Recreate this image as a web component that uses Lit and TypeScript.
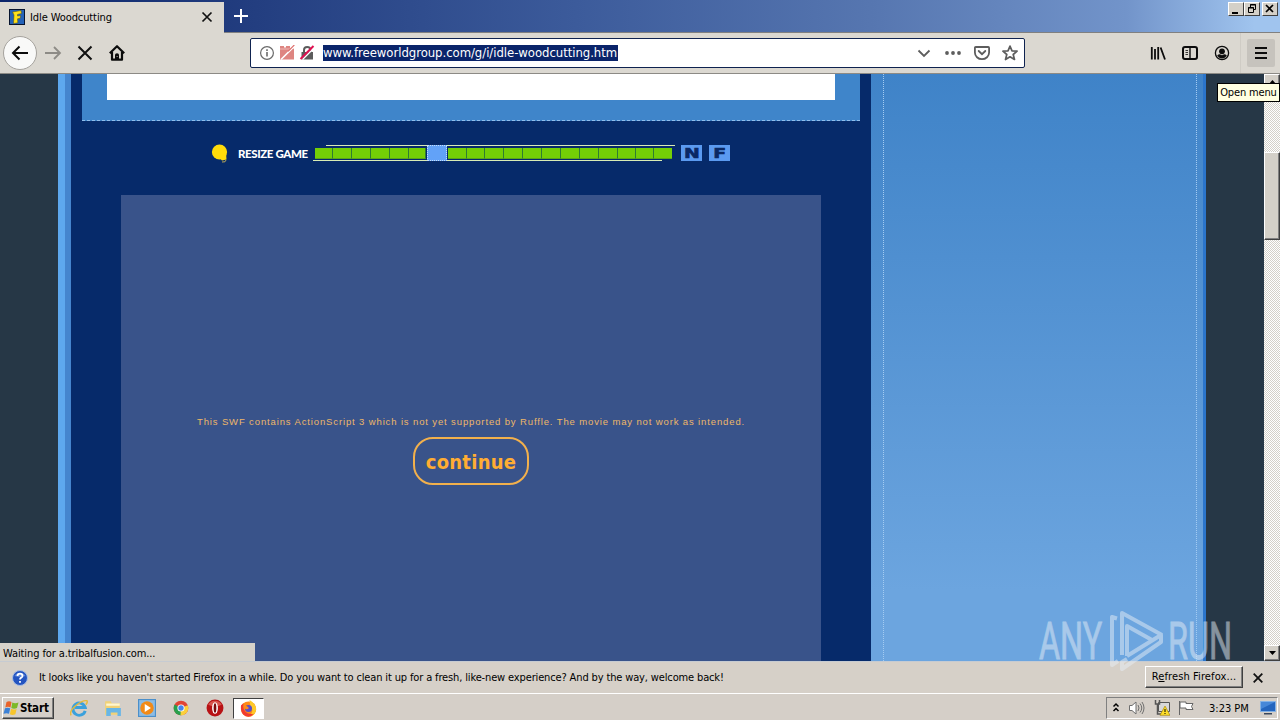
import { LitElement, html, css, svg } from "lit";
import { customElement } from "lit/decorators.js";

// widths of the blocks on the resize bar, -1 marks the handle
const BLOCKS = [18, 19, 19, 19, 19, 17, -1, 19, 18, 19, 19, 19, 19, 19, 19, 19, 18, 18, 18];

@customElement("browser-tabs")
class BrowserTabs extends LitElement {
  static get styles() {
    return css`
      :host {
        display: flex;
        height: 33px;
        box-sizing: border-box;
        background: linear-gradient(90deg, #0a246a 0, #233e80 20%, #3c5b9b 45%, #5676b0 68%, #7294ca 88%, #a0c4ee 98%);
        border-bottom: 1px solid #808080;
        position: relative;
      }
      .tab {
        display: flex;
        align-items: center;
        width: 224px;
        height: 31px;
        margin-top: 2px;
        background: #dbd8d1;
        box-sizing: border-box;
        padding: 0 11px 1px 9px;
      }
      .title {
        flex: 1;
        margin-left: 5px;
        letter-spacing: -0.1px;
      }
      .plus {
        margin: 9px 0 0 10px;
      }
      .buttons {
        display: flex;
        margin: 2px 2px 0 auto;
        height: 14px;
      }
      .btn {
        width: 16px;
        height: 14px;
        box-sizing: border-box;
        background: #d4d0c8;
        border: 1px solid;
        border-color: #fff #404040 #404040 #fff;
      }
      .btn:last-child {
        margin-left: 2px;
      }
      svg {
        display: block;
      }
    `;
  }

  render() {
    return html`
      <div class="tab">
        <svg width="16" height="16" viewBox="0 0 16 16">
          <rect x=".5" y=".5" width="15" height="15" fill="#2462b8" stroke="#07142f" />
          <path d="M3.500 3 12 1.500 12.500 4.500 8.500 5.400 8.500 7 11.500 6.500 11.300 9.200 8.500 9.800 8.800 13.800 4.500 14.500 5 6z" fill="#ffe11b" stroke="#594f08" stroke-width=".5" />
        </svg>
        <span class="title">Idle Woodcutting</span>
        <svg width="12" height="12" viewBox="0 0 12 12">
          <path d="M1.500 1.500 10.500 10.500M10.500 1.500 1.500 10.500" stroke="#111" stroke-width="1.700" />
        </svg>
      </div>
      <svg class="plus" width="14" height="14" viewBox="0 0 14 14">
        <path d="M7 0V14M0 7H14" stroke="#fff" stroke-width="2" />
      </svg>
      <div class="buttons">
        <div class="btn"><svg width="14" height="12"><path d="M3 9h6v2H3z" /></svg></div>
        <div class="btn">
          <svg width="14" height="12" fill="none" stroke="#000">
            <path d="M5.500 4V1.500h5v5H9M5 2h6M3.500 4.500h5v5h-5zM3 5h6" />
          </svg>
        </div>
        <div class="btn">
          <svg width="14" height="12"><path d="M3 2 10 9M10 2 3 9" stroke="#000" stroke-width="1.700" /></svg>
        </div>
      </div>
    `;
  }
}

@customElement("nav-bar")
class NavBar extends LitElement {
  static get styles() {
    return css`
      :host {
        display: flex;
        align-items: center;
        height: 41px;
        box-sizing: border-box;
        background: #dbd8d1;
        border-bottom: 1px solid #8c8a85;
        position: relative;
      }
      svg {
        display: block;
        flex: none;
      }
      .left {
        display: flex;
        align-items: center;
        width: 250px;
        box-sizing: border-box;
        padding-left: 3px;
      }
      .back {
        width: 34px;
        height: 34px;
        box-sizing: border-box;
        border: 1px solid #a5a29d;
        border-radius: 50%;
        background: #f9f9f8;
        display: grid;
        place-items: center;
        margin-right: 8px;
      }
      .left > svg {
        margin-right: 15px;
      }
      .left > .home {
        margin-right: 0;
      }
      .url {
        display: flex;
        align-items: center;
        width: 775px;
        height: 30px;
        margin-top: -1px;
        box-sizing: border-box;
        border: 1px solid #0f2350;
        border-radius: 2px;
        background: #fff;
        padding: 0 6px 0 8px;
      }
      .url > svg {
        margin-right: 4px;
      }
      .address {
        background: #0a246a;
        color: #fff;
        font-size: 13px;
        line-height: 16px;
        height: 16px;
        width: 295px;
        margin-left: 4px;
        white-space: nowrap;
        letter-spacing: -0.05px;
      }
      .actions {
        display: flex;
        gap: 12px;
        margin-left: auto;
      }
      .tools {
        display: flex;
        align-items: center;
        margin-left: auto;
        gap: 16px;
        height: 40px;
      }
      .menu {
        height: 40px;
        border-left: 1px solid #cfccc5;
        display: flex;
        align-items: center;
        padding: 0 5px 0 6px;
        margin-left: -6px;
      }
      .menu div {
        width: 28px;
        height: 28px;
        background: #c6c3bd;
        border-radius: 2px;
        display: grid;
        place-items: center;
      }
    `;
  }

  render() {
    return html`
      <div class="left">
        <div class="back">
          <svg width="18" height="16" viewBox="0 0 18 16" fill="none" stroke="#0c0c0c" stroke-width="2">
            <path d="M17 8H2M8.500 1.500 2 8l6.500 6.500" />
          </svg>
        </div>
        <svg width="17" height="16" viewBox="0 0 17 16" fill="none" stroke="#8d8b86" stroke-width="1.800">
          <path d="M0 8h15M9 2l6 6-6 6" />
        </svg>
        <svg width="16" height="16" viewBox="0 0 16 16" stroke="#111" stroke-width="2">
          <path d="M1.500 1.500 14.500 14.500M14.500 1.500 1.500 14.500" />
        </svg>
        <svg class="home" width="18" height="16" viewBox="-1 0 18 16">
          <path d="M.8 8.300 8 1.200 15.200 8.300M3 7v7.700h10V7" fill="none" stroke="#0c0c0c" stroke-width="2.200" stroke-linejoin="round" />
          <path d="M6 14.500V9.800q0-1.600 2-1.600t2 1.600v4.700z" fill="#0c0c0c" />
          <path d="M7.700 11h.8v1h-.8z" fill="#dbd8d1" />
        </svg>
      </div>
      <div class="url">
        <svg width="16" height="16" viewBox="0 0 16 16">
          <circle cx="8" cy="8" r="6.400" fill="none" stroke="#6b6b6b" stroke-width="1.200" />
          <path d="M7.200 7h1.600v4.500H7.200zM7.200 4.300h1.600v1.600H7.200z" fill="#6b6b6b" />
        </svg>
        <svg width="16" height="16" viewBox="0 0 16 16">
          <path d="M1 1h4v1.500h2V1h4v2.500h4V14.500H1z" fill="#de8581" />
          <path d="M1 4h10" stroke="#f3c8c6" stroke-width=".8" />
          <path d="M15.500 1 2 14.500" stroke="#fff" stroke-width="1.600" />
          <path d="M15.300 0 9 6.300" stroke="#de6f6c" stroke-width="1.200" />
        </svg>
        <svg width="16" height="16" viewBox="0 0 16 16">
          <path d="M5 7.500V5q0-3 3.200-3t3.200 3v2.500" fill="none" stroke="#5c5c5c" stroke-width="2" />
          <path d="M2.500 7h11.500V14.500H2.500z" fill="#5c5c5c" />
          <path d="M15.500 2.500 3.500 14.500" stroke="#fff" stroke-width="1.500" />
          <path d="M14.500 1 1.500 14" stroke="#e01050" stroke-width="2" />
        </svg>
        <div class="address">www.freeworldgroup.com/g/i/idle-woodcutting.htm</div>
        <div class="actions">
          <svg width="16" height="16" viewBox="0 0 16 16" fill="none" stroke="#5d5d5d" stroke-width="1.800">
            <path d="M2.500 5.500 8 11l5.500-5.500" />
          </svg>
          <svg width="18" height="16" viewBox="0 0 18 16" fill="#5d5d5d">
            <circle cx="3" cy="8" r="1.900" /><circle cx="9" cy="8" r="1.900" /><circle cx="15" cy="8" r="1.900" />
          </svg>
          <svg width="16" height="16" viewBox="0 0 16 16" fill="none" stroke="#5d5d5d" stroke-width="1.800">
            <path d="M1.800 2h12.400q.9 0 .9.900V7.500a7.100 6.700 0 0 1-14.200 0V2.900q0-.9.900-.9z" />
            <path d="M4.700 6 8 9.200 11.300 6" stroke-linecap="round" />
          </svg>
          <svg width="16" height="16" viewBox="0 0 16 16" fill="none" stroke="#5d5d5d" stroke-width="1.700" stroke-linejoin="round">
            <path d="M8 1.100 10 5.800l5.100.4-3.900 3.300 1.300 5L8 11.800l-4.500 2.700 1.300-5L.9 6.200 6 5.800z" />
          </svg>
        </div>
      </div>
      <div class="tools">
        <svg width="16" height="16" viewBox="0 0 16 16" fill="none" stroke="#0c0c0c" stroke-width="1.800">
          <path d="M1.800 2v12.500M5 4v10.500M8.200 2v12.500M10.600 2.500l4.400 12" />
        </svg>
        <svg width="16" height="16" viewBox="0 0 16 16" fill="none" stroke="#0c0c0c">
          <rect x="1" y="2" width="14" height="12" rx="2" stroke-width="2" />
          <path d="M8 2v12" stroke-width="1.400" />
          <path d="M3.500 5.500H6M3.500 7.500H6M3.500 9.500H6" stroke-width=".8" />
        </svg>
        <svg width="16" height="16" viewBox="0 0 16 16">
          <circle cx="8" cy="8" r="6.600" fill="none" stroke="#0c0c0c" stroke-width="1.300" />
          <circle cx="8" cy="6.300" r="2.900" fill="#0c0c0c" />
          <path d="M3.200 10.300Q5 9 6.500 9.500L8 10.200 9.500 9.500Q11 9 12.800 10.300 11 13.500 8 13.500T3.200 10.300z" fill="#0c0c0c" />
        </svg>
        <div class="menu">
          <div>
            <svg width="12" height="12" viewBox="0 0 12 12"><path d="M0 1h12M0 6h12M0 11h12" stroke="#0c0c0c" stroke-width="2" /></svg>
          </div>
        </div>
      </div>
    `;
  }
}

@customElement("game-page")
class GamePage extends LitElement {
  static get styles() {
    return css`
      :host {
        display: flex;
        height: 587px;
        background: #263746;
        overflow: hidden;
        position: relative;
      }
      .edge {
        width: 13px;
        margin-left: 58px;
        background: linear-gradient(90deg, #5ea8ee 7px, #4585ce 7px);
      }
      .main {
        width: 800px;
        background: #062a6a;
        display: flex;
        flex-direction: column;
        align-items: center;
      }
      .banner {
        width: 778px;
        height: 47px;
        box-sizing: border-box;
        background: #3f85ca;
        border-bottom: 1px dashed #8fbdec;
        padding: 0 25px;
      }
      .ad {
        height: 26px;
        background: #fff;
      }
      .resize {
        display: flex;
        align-items: center;
        align-self: stretch;
        height: 64px;
        padding-left: 139px;
        margin-bottom: 10px;
        box-sizing: border-box;
      }
      .label {
        width: 75px;
        margin-left: 8px;
        color: #fff;
        font: 900 11.500px Lato, sans-serif;
        letter-spacing: -0.4px;
        white-space: nowrap;
      }
      .bar {
        display: flex;
        align-items: center;
        position: relative;
        width: 362px;
        height: 16px;
        padding-left: 2px;
        box-sizing: border-box;
        background: linear-gradient(#d9ecb4, #d9ecb4) 13px 0 / 349px 1px no-repeat,
          linear-gradient(#d9ecb4, #d9ecb4) 0 15px / 349px 1px no-repeat;
      }
      .block {
        flex: none;
        height: 11px;
        box-sizing: border-box;
        background: #74cf06;
        border-right: 1px solid #2f7c33;
        border-bottom: 1px solid #59a51a;
      }
      .block:last-child {
        border-right: 0;
      }
      .handle {
        flex: none;
        width: 20px;
        height: 16px;
        margin: 0 1px;
        box-sizing: border-box;
        background: #62a2f8;
        border: 1px dotted #c5defb;
      }
      .key {
        width: 21px;
        height: 16px;
        margin-left: 6px;
        background: #5b9af0;
        text-align: center;
        color: #0a2864;
        font: bold 14px/16px "DejaVu Sans", sans-serif;
        -webkit-text-stroke: 0.6px #0a2864;
      }
      .key + .key {
        margin-left: 7px;
      }
      .key span {
        display: inline-block;
        transform: scaleX(1.35);
      }
      .movie {
        flex: 1;
        width: 700px;
        background: #39538a;
        color: #ffad33;
        display: flex;
        flex-direction: column;
        align-items: center;
      }
      .warning {
        margin-top: 220px;
        color: #edb769;
        font: 9.500px/13px "Liberation Sans", sans-serif;
        letter-spacing: 0.87px;
        white-space: nowrap;
      }
      .continue {
        margin-top: 9px;
        width: 116px;
        height: 48px;
        box-sizing: border-box;
        border: 2px solid #f2b04c;
        border-radius: 20px;
        font: bold 20px/46px "DejaVu Sans Condensed", sans-serif;
        letter-spacing: 0.25px;
        text-align: center;
      }
      .side {
        width: 335px;
        box-sizing: border-box;
        border-right: 3px solid #2b75cb;
        background: linear-gradient(#3f83c8, #6ca5df 88%);
        padding: 0 6px 0 12px;
      }
      .side div {
        height: 100%;
        box-sizing: border-box;
        border: 1px dotted #a3cbf2;
        border-width: 0 1px;
      }
      .scroll {
        width: 16px;
        margin-left: auto;
        background: repeating-conic-gradient(#fff 0 25%, #d4d0c8 0 50%) 0 0 / 2px 2px;
        display: flex;
        flex-direction: column;
      }
      .scroll div {
        box-sizing: border-box;
        height: 16px;
        background: #d4d0c8;
        border: 1px solid;
        border-color: #fff #404040 #404040 #fff;
        box-shadow: inset -1px -1px #808080;
        display: grid;
        place-items: center;
      }
      .scroll .thumb {
        height: 88px;
        margin: 62px 0 auto;
      }
      .status {
        position: absolute;
        left: 0;
        bottom: 0;
        width: 255px;
        height: 18px;
        box-sizing: border-box;
        background: #d6d2ca;
        padding: 4px 3px 0;
        line-height: 14px;
        letter-spacing: -0.1px;
      }
    `;
  }

  render() {
    return html`
      <div class="edge"></div>
      <div class="main">
        <div class="banner"><div class="ad"></div></div>
        <div class="resize">
          <svg width="20" height="20" viewBox="0 0 20 20">
            <circle cx="9.500" cy="9" r="7.600" fill="#ffdc0a" />
            <path d="M9 15q2 1 3 2.500l4.500-1-.5-7z" fill="#ffdc0a" />
            <path d="M12 19q4 .5 4-2" fill="none" stroke="#b9a75a" />
          </svg>
          <span class="label">RESIZE GAME</span>
          <div class="bar">
            ${BLOCKS.map((w) => (w < 0 ? html`<div class="handle"></div>` : html`<div class="block" style="width:${w}px"></div>`))}
          </div>
          <div class="key"><span>N</span></div>
          <div class="key"><span>F</span></div>
        </div>
        <div class="movie">
          <div class="warning">This SWF contains ActionScript 3 which is not yet supported by Ruffle. The movie may not work as intended.</div>
          <div class="continue">continue</div>
        </div>
      </div>
      <div class="side"><div></div></div>
      <div class="scroll">
        <div><svg width="7" height="4"><path d="M0 4h7L3.500 0z" /></svg></div>
        <div class="thumb"></div>
        <div><svg width="7" height="4"><path d="M0 0h7L3.500 4z" /></svg></div>
      </div>
      <div class="status">Waiting for a.tribalfusion.com...</div>
    `;
  }
}

@customElement("notice-bar")
class NoticeBar extends LitElement {
  static get styles() {
    return css`
      :host {
        display: flex;
        align-items: center;
        height: 33px;
        box-sizing: border-box;
        background: #d6d0c8;
        border-top: 1px solid #c6cbd2;
        border-bottom: 1px solid #fff;
        padding: 0 17px 0 12px;
      }
      span {
        flex: 1;
        margin-left: 11px;
        white-space: nowrap;
        letter-spacing: -0.14px;
      }
      .refresh {
        width: 98px;
        height: 22px;
        margin: -2px 10px 0 0;
        box-sizing: border-box;
        border: 1px solid;
        border-color: #fff #404040 #404040 #fff;
        box-shadow: inset -1px -1px #808080;
        line-height: 20px;
        text-align: center;
        white-space: nowrap;
        letter-spacing: 0.1px;
      }
    `;
  }

  render() {
    return html`
      <svg width="16" height="16" viewBox="0 0 16 16">
        <circle cx="8" cy="8" r="7.500" fill="#2454c0" stroke="#a8bde2" />
        <path d="M2.500 6a6 5 0 0 1 11 0Q8 8 2.500 6z" fill="#5f87da" />
        <path d="M5.500 6q0-2.400 2.500-2.400T10.500 6Q10.400 7.200 8.900 7.900 8 8.400 8 9.500M8 11v1.800" fill="none" stroke="#fff" stroke-width="1.800" />
      </svg>
      <span>It looks like you haven't started Firefox in a while. Do you want to clean it up for a fresh, like-new experience? And by the way, welcome back!</span>
      <div class="refresh">R<u>e</u>fresh Firefox...</div>
      <svg width="10" height="10" viewBox="0 0 10 10"><path d="M.7.700 9.300 9.300M9.300.700.700 9.300" stroke="#111" stroke-width="1.800" /></svg>
    `;
  }
}

@customElement("task-bar")
class TaskBar extends LitElement {
  static get styles() {
    return css`
      :host {
        display: flex;
        height: 26px;
        background: #d5cfc8;
        padding: 2px 2px 0;
        box-sizing: border-box;
      }
      svg {
        display: block;
        flex: none;
      }
      .start {
        display: flex;
        align-items: center;
        width: 52px;
        height: 22px;
        box-sizing: border-box;
        border: 1px solid;
        border-color: #fff #404040 #404040 #fff;
        box-shadow: inset -1px -1px #808080;
        font-weight: bold;
        font-size: 11.500px;
        letter-spacing: -0.15px;
      }
      .apps {
        display: flex;
        align-items: center;
        gap: 16px;
        height: 22px;
        margin-left: 16px;
      }
      .active {
        width: 31px;
        height: 21px;
        margin-left: -7px;
        box-sizing: border-box;
        background: #fff;
        border: 1px solid;
        border-color: #404040 #fff #fff #404040;
        display: grid;
        place-items: center;
      }
      .tray {
        display: flex;
        align-items: center;
        margin-left: auto;
        width: 172px;
        height: 22px;
        box-sizing: border-box;
        border: 1px solid;
        border-color: #808080 #fff #fff #808080;
        padding: 0 1px 0 5px;
      }
      .tray svg {
        margin-right: 8px;
      }
      .tray svg:last-child {
        margin: 0 0 0 auto;
      }
      .time {
        margin-left: 6px;
        white-space: nowrap;
      }
    `;
  }

  apps() {
    return [
      svg`<path d="M13.500 10.500A5.500 5.500 0 1 1 13.500 7.500H4.500" fill="none" stroke="#3ba1dc" stroke-width="2.600"/>
        <path d="M1 14.500Q-1 11 5 6T15 1.500Q16 3 14 5" fill="none" stroke="#e5ba3b" stroke-width="1.300"/>`,
      svg`<path d="M1 2h5l1 2h7v10H1z" fill="#f1d276"/><path d="M2 4h12v2H2z" fill="#fff6cf"/>
        <path d="M2 8h13v7h-3v-3H6v3H2z" fill="#68b6e6"/>`,
      svg`<rect x=".5" y=".5" width="15" height="15" fill="#8cbce4" stroke="#4b8fca"/>
        <circle cx="8" cy="8" r="6" fill="#f28a17"/><path d="M6 4.500v7L11.500 8z" fill="#fff"/>`,
      svg`<circle cx="8" cy="8" r="6.500" fill="#e14434"/><path d="M8 8 2.300 4.800A6.500 6.500 0 0 0 8 14.500z" fill="#28a04d"/>
        <path d="M8 8 14 5.500A6.500 6.500 0 0 1 7.500 14.500z" fill="#fbd03b"/><circle cx="8" cy="8" r="3.200" fill="#fff"/>
        <circle cx="8" cy="8" r="2.400" fill="#4684ec"/>`,
      svg`<circle cx="8" cy="8" r="7.500" fill="#b81215"/><path d="M2 5a7 7 0 0 1 12 0Q8 8 2 5z" fill="#d8564f"/>
        <ellipse cx="8" cy="8" rx="2.600" ry="5.200" fill="#fff"/><ellipse cx="8" cy="8" rx="1.200" ry="4.300" fill="#7a0a0c"/>`,
    ];
  }

  render() {
    return html`
      <div class="start">
        <svg width="17" height="16" viewBox="0 0 17 16">
          <path d="M3.500 2Q6 .5 8.500 2L7.500 7.500Q5 6 2.300 7.500z" fill="#e9632a" />
          <path d="M9.300 2.500Q12 4 15.500 2.500L14 8Q11 9.500 8.300 8z" fill="#7db929" />
          <path d="M2 8.300Q4.500 7 7.200 8.300L6 13.800Q3.500 12.500.5 13.800z" fill="#3c81d6" />
          <path d="M8.100 8.800Q10.500 10.300 13.600 8.900L12.400 14.300Q9.500 15.800 6.900 14.300z" fill="#f7c52b" />
        </svg>
        Start
      </div>
      <div class="apps">
        ${this.apps().map((icon) => html`<svg width="18" height="18" viewBox="0 0 16 16">${icon}</svg>`)}
        <div class="active">
          <svg width="17" height="17" viewBox="0 0 16 16">
            <circle cx="8" cy="8.500" r="7.200" fill="#ff8a16" />
            <path d="M9 0Q15.500 4 15.200 9.500 14 15 8 15.800 13 12 11 7 9 5 9 0z" fill="#ffc928" />
            <path d="M1 5Q0 12 5 15q5 2 8-2Q8 14 5 11 2 8 3.500 3z" fill="#f03b32" />
            <circle cx="8" cy="8" r="3.300" fill="#5a4ec6" />
            <path d="M3.500 5.500q3-.5 5 2Q7 9 5 8.500z" fill="#ff8a16" />
          </svg>
        </div>
      </div>
      <div class="tray">
        <svg width="8" height="12" viewBox="0 0 8 12" fill="none" stroke="#000" stroke-width="1.500">
          <path d="M1.500 4.500 4 2l2.500 2.500M1.500 9 4 6.500 6.500 9" />
        </svg>
        <svg width="18" height="16" viewBox="0 0 18 16" fill="#fff" stroke="#6f6f6f">
          <path d="M1.500 5.500H4L8 2v12L4 10.500H1.500z" />
          <path d="M10 5q2 3 0 6M12 3.500q3.500 4.500 0 9M14 2q4 6 0 12" fill="none" />
        </svg>
        <svg width="16" height="16" viewBox="0 0 16 16">
          <path d="M4.500 2.500h11v9h-11z" fill="#d8d8d8" stroke="#555" />
          <path d="M1.500 0v4h4V0M3.500 4v10h5" fill="none" stroke="#555" stroke-width="1.500" />
          <path d="M11 6 16 15.300H6z" fill="#ffdf28" stroke="#a88a10" stroke-width=".7" />
          <path d="M11 9v3M11 13v1" stroke="#000" />
        </svg>
        <svg width="17" height="16" viewBox="0 0 17 16" fill="#fff" stroke="#666">
          <path d="M1.500 1v14M2 2h6v1.500h7L13.500 6.500l1.500 3H8V8H2z" />
        </svg>
        <span class="time">3:23 PM</span>
        <svg width="16" height="14" viewBox="0 0 16 14">
          <path d="M.5.500h15v10H.5z" fill="#2465be" stroke="#83b1e5" />
          <path d="M1 1h14L1 8z" fill="#4687d8" />
          <path d="M4 12h8v1.500H4z" fill="#38465c" />
        </svg>
      </div>
    `;
  }
}

@customElement("app-root")
class AppRoot extends LitElement {
  static get styles() {
    return css`
      :host {
        display: block;
        width: 1280px;
        height: 720px;
        position: relative;
        overflow: hidden;
        background: #d5cfc8;
        color: #000;
        font: 11px "DejaVu Sans Condensed", "DejaVu Sans", sans-serif;
      }
      .tooltip {
        position: absolute;
        left: 1217px;
        top: 83px;
        width: 63px;
        height: 19px;
        box-sizing: border-box;
        border: 1px solid #000;
        background: #ffffe1;
        line-height: 18px;
        letter-spacing: -0.15px;
        text-align: center;
        white-space: nowrap;
      }
      .watermark {
        position: absolute;
        left: 1030px;
        top: 590px;
      }
      task-bar {
        margin-top: 1px;
      }
    `;
  }

  render() {
    return html`
      <browser-tabs></browser-tabs>
      <nav-bar></nav-bar>
      <game-page></game-page>
      <notice-bar></notice-bar>
      <task-bar></task-bar>
      <div class="tooltip">Open menu</div>
      <svg class="watermark" width="250" height="110" viewBox="1030 590 250 110" opacity=".5">
        <g fill="#e6eef6" stroke="#e6eef6" stroke-width=".8" font-family="Roboto, sans-serif" font-size="51">
          <text transform="translate(1039 659) scale(.635 1)">ANY</text>
          <text transform="translate(1168 659) scale(.635 1)">RUN</text>
        </g>
        <g fill="none" stroke="#e6eef6" stroke-width="4" stroke-linejoin="round">
          <path d="M1117 618.500 1112 617V665L1118 661" />
          <path d="M1122 655V613L1162 635" />
          <path d="M1127 656V626L1152 640" />
          <path d="M1127 656 1161 635V642L1122 669V662L1127 659" />
        </g>
      </svg>
    `;
  }
}
